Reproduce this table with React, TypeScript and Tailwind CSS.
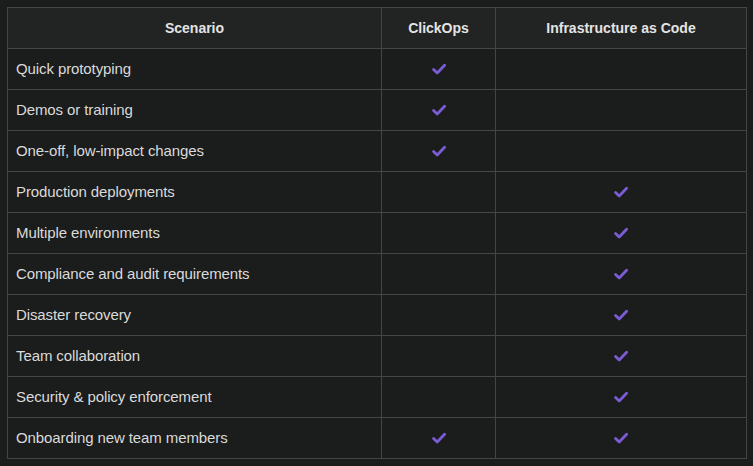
import React from "react";

const rows: [string, boolean, boolean][] = [
  ["Quick prototyping", true, false],
  ["Demos or training", true, false],
  ["One-off, low-impact changes", true, false],
  ["Production deployments", false, true],
  ["Multiple environments", false, true],
  ["Compliance and audit requirements", false, true],
  ["Disaster recovery", false, true],
  ["Team collaboration", false, true],
  ["Security & policy enforcement", false, true],
  ["Onboarding new team members", true, true],
];

function Check() {
  return (
    <svg width="14" height="12" viewBox="0 0 14 12" className="block">
      <path
        d="M1.6 6.4 L5.2 10 L12.6 2.2"
        fill="none"
        stroke="#7b5cd4"
        strokeWidth="2.8"
        strokeLinecap="round"
        strokeLinejoin="round"
      />
    </svg>
  );
}

export default function App() {
  return (
    <div
      className="w-[753px] h-[466px] bg-[#1b1c1c] pt-[7px] pl-[7px]"
      style={{ fontFamily: '"Liberation Sans", Arial, sans-serif' }}
    >
      <div className="w-[740px] border border-[#454545] grid grid-cols-[374px_114px_250px] text-[14px]">
        <div className="h-[41px] bg-[#222323] border-r border-b border-[#454545] flex items-center justify-center font-bold text-[#e4e4e4]">
          Scenario
        </div>
        <div className="h-[41px] bg-[#222323] border-r border-b border-[#454545] flex items-center justify-center font-bold text-[#e4e4e4]">
          ClickOps
        </div>
        <div className="h-[41px] bg-[#222323] border-b border-[#454545] flex items-center justify-center font-bold text-[#e4e4e4]">
          Infrastructure as Code
        </div>
        {rows.map(([label, a, b], i) => {
          const last = i === rows.length - 1;
          const rowCls = last ? "h-[40px]" : "h-[41px] border-b";
          return (
            <React.Fragment key={label}>
              <div className={`${rowCls} border-r border-[#454545] flex items-center pl-[8px] text-[15px] tracking-[-0.1px] text-[#dadada]`}>
                {label}
              </div>
              <div className={`${rowCls} border-r border-[#454545] flex items-center justify-center`}>
                {a && <Check />}
              </div>
              <div className={`${rowCls} border-[#454545] flex items-center justify-center`}>
                {b && <Check />}
              </div>
            </React.Fragment>
          );
        })}
      </div>
    </div>
  );
}
